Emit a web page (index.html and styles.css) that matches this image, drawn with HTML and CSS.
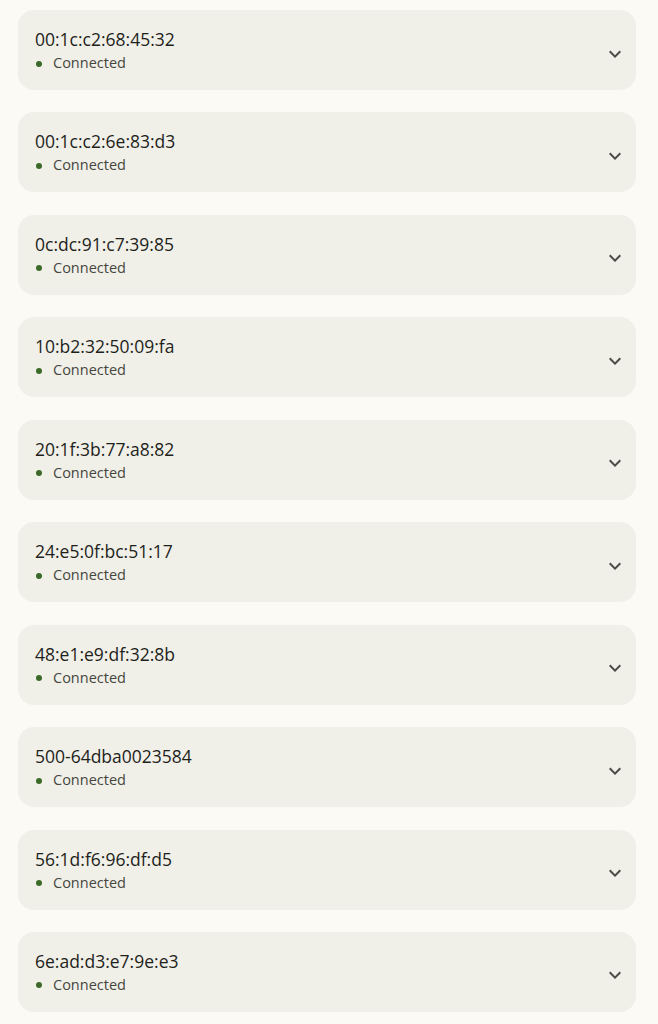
FILE: index.html
```html
<!DOCTYPE html>
<html>
<head>
<meta charset="utf-8">
<link rel="stylesheet" href="styles.css">
</head>
<body>
<div class="list">
  <div class="card"><div class="info"><div class="name">00:1c:c2:68:45:32</div><div class="status"><span class="dot"></span>Connected</div></div><svg class="chev" viewBox="0 0 24 24"><path d="M7.4 8.6 12 13.2l4.6-4.6L18 10l-6 6-6-6z"/></svg></div>
  <div class="card"><div class="info"><div class="name">00:1c:c2:6e:83:d3</div><div class="status"><span class="dot"></span>Connected</div></div><svg class="chev" viewBox="0 0 24 24"><path d="M7.4 8.6 12 13.2l4.6-4.6L18 10l-6 6-6-6z"/></svg></div>
  <div class="card"><div class="info"><div class="name">0c:dc:91:c7:39:85</div><div class="status"><span class="dot"></span>Connected</div></div><svg class="chev" viewBox="0 0 24 24"><path d="M7.4 8.6 12 13.2l4.6-4.6L18 10l-6 6-6-6z"/></svg></div>
  <div class="card"><div class="info"><div class="name">10:b2:32:50:09:fa</div><div class="status"><span class="dot"></span>Connected</div></div><svg class="chev" viewBox="0 0 24 24"><path d="M7.4 8.6 12 13.2l4.6-4.6L18 10l-6 6-6-6z"/></svg></div>
  <div class="card"><div class="info"><div class="name">20:1f:3b:77:a8:82</div><div class="status"><span class="dot"></span>Connected</div></div><svg class="chev" viewBox="0 0 24 24"><path d="M7.4 8.6 12 13.2l4.6-4.6L18 10l-6 6-6-6z"/></svg></div>
  <div class="card"><div class="info"><div class="name">24:e5:0f:bc:51:17</div><div class="status"><span class="dot"></span>Connected</div></div><svg class="chev" viewBox="0 0 24 24"><path d="M7.4 8.6 12 13.2l4.6-4.6L18 10l-6 6-6-6z"/></svg></div>
  <div class="card"><div class="info"><div class="name">48:e1:e9:df:32:8b</div><div class="status"><span class="dot"></span>Connected</div></div><svg class="chev" viewBox="0 0 24 24"><path d="M7.4 8.6 12 13.2l4.6-4.6L18 10l-6 6-6-6z"/></svg></div>
  <div class="card"><div class="info"><div class="name">500-64dba0023584</div><div class="status"><span class="dot"></span>Connected</div></div><svg class="chev" viewBox="0 0 24 24"><path d="M7.4 8.6 12 13.2l4.6-4.6L18 10l-6 6-6-6z"/></svg></div>
  <div class="card"><div class="info"><div class="name">56:1d:f6:96:df:d5</div><div class="status"><span class="dot"></span>Connected</div></div><svg class="chev" viewBox="0 0 24 24"><path d="M7.4 8.6 12 13.2l4.6-4.6L18 10l-6 6-6-6z"/></svg></div>
  <div class="card"><div class="info"><div class="name">6e:ad:d3:e7:9e:e3</div><div class="status"><span class="dot"></span>Connected</div></div><svg class="chev" viewBox="0 0 24 24"><path d="M7.4 8.6 12 13.2l4.6-4.6L18 10l-6 6-6-6z"/></svg></div>
</div>
</body>
</html>
```
FILE: styles.css
```css
html, body {
  margin: 0;
  padding: 0;
  background: #fbfaf4;
}
body {
  font-family: "Open Sans", "Roboto", sans-serif;
  color: #1f1f1c;
}
.list {
  display: flex;
  flex-direction: column;
  gap: 22.44px;
  padding: 10px 22px 0 18px;
}
.card {
  height: 80px;
  box-sizing: border-box;
  background: #f0f0e8;
  border-radius: 16px;
  display: flex;
  align-items: center;
  justify-content: space-between;
  padding: 0 9px 0 17px;
}
.info {
  display: flex;
  flex-direction: column;
  gap: 2px;
  margin-top: 0;
}
.name {
  font-size: 17.5px;
  line-height: 24px;
  color: #1f1f1c;
}
.status {
  display: flex;
  align-items: center;
  font-size: 14.5px;
  line-height: 20px;
  color: #46463f;
}
.dot {
  width: 6px;
  height: 6px;
  border-radius: 50%;
  background: #3b6a28;
  margin: 1px 11px 0 1px;
}
.chev {
  width: 24px;
  height: 24px;
  fill: #4c4c46;
  margin-top: 7px;
}
```
